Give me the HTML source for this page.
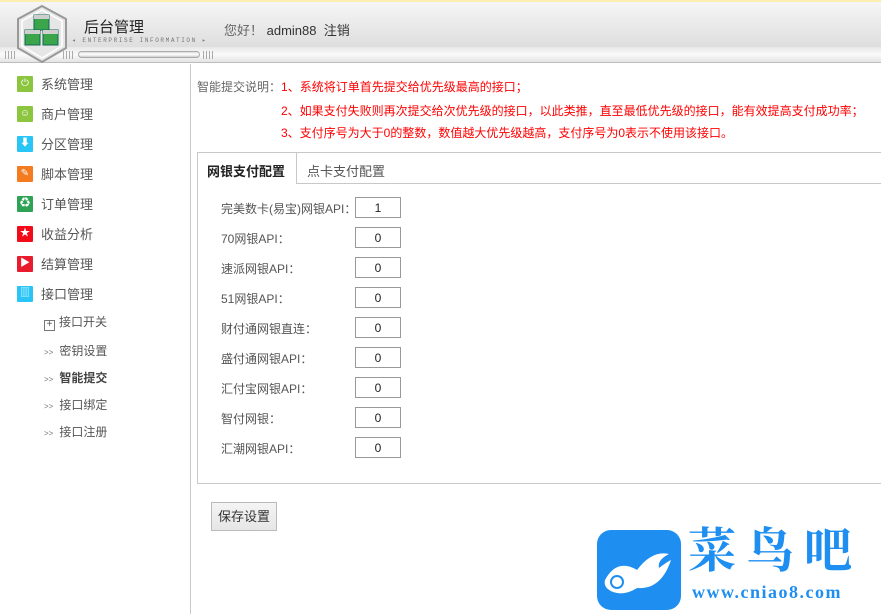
<!DOCTYPE html>
<html><head><meta charset="utf-8">
<style>
*{margin:0;padding:0;box-sizing:border-box}
body{width:881px;height:614px;overflow:hidden;background:#fff;font-family:"Liberation Sans","Noto Sans CJK SC",sans-serif;font-size:12px;color:#555;position:relative}
.hdr{position:absolute;left:0;top:0;width:881px;height:47px;background:linear-gradient(#f6f6f6,#dedede);border-top:2px solid #fbeeb0}
.bar{position:absolute;left:0;top:47px;width:881px;height:16px;background:linear-gradient(#e8e8e8,#fafafa 50%,#e4e4e4);border-bottom:1px solid #bdbdbd}
.ticks{position:absolute;top:51px;height:8px;background:repeating-linear-gradient(90deg,#aaa 0 1px,transparent 1px 3px)}
.pill{position:absolute;left:78px;top:51px;width:122px;height:7px;border:1px solid #aaa;border-radius:4px;background:linear-gradient(#ddd,#fff,#ccc)}
.title{position:absolute;left:84px;top:16px;font-size:15px;color:#222}
.sub{position:absolute;left:72px;top:37px;font-size:6px;letter-spacing:1.6px;color:#777;font-family:"Liberation Mono",monospace}
.hello{position:absolute;left:224px;top:20px;font-size:13px;color:#333}
.hello span{color:#666}
.side{position:absolute;left:0;top:64px;width:191px;height:550px;border-right:1px solid #c8c8c8}
.mi{position:absolute;left:17px;height:17px;font-size:13px;color:#555;display:flex;align-items:center}
.mi i{display:inline-block;width:16px;height:16px;margin-right:8px;border-radius:1px;color:#fff;font-style:normal;font-size:10px;line-height:16px;text-align:center}
.si{position:absolute;left:44px;font-size:12px;color:#555}
.si b{font-size:8px;color:#777;font-weight:normal;margin-right:6px}
.note{position:absolute;left:197px;font-size:12px;color:#ff0000}
.panel{position:absolute;left:197px;top:152px;width:684px;height:332px;border:1px solid #c8c8c8;border-right:none}
.tabline{position:absolute;left:296px;top:183px;width:585px;height:1px;background:#c8c8c8}
.tab1{position:absolute;left:207px;top:161px;font-size:13px;font-weight:bold;color:#222}
.tab2{position:absolute;left:307px;top:161px;font-size:13px;color:#555}
.tabsep{position:absolute;left:296px;top:152px;width:1px;height:32px;background:#c8c8c8}
.row{position:absolute;left:221px;font-size:12px;color:#555}
.inp{position:absolute;left:355px;width:46px;height:21px;border:1px solid #999;font-size:12px;color:#222;text-align:center;line-height:21px}
.btn{position:absolute;left:211px;top:502px;width:66px;height:29px;border:1px solid #bbb;background:linear-gradient(#f4f4f4,#e6e6e6);font-size:13px;color:#333;text-align:center;line-height:27px}
</style></head><body>
<div class="hdr"></div>
<div class="bar"></div>
<div class="ticks" style="left:5px;width:12px"></div>
<div class="ticks" style="left:63px;width:12px"></div>
<div class="pill"></div>
<div class="ticks" style="left:203px;width:12px"></div>
<svg style="position:absolute;left:15px;top:4px" width="54" height="60" viewBox="0 0 54 60">
<polygon points="27,2 51,15 51,44 27,58 3,44 3,15" fill="#e6e6e6" stroke="#999" stroke-width="2"/>
<polygon points="27,6 47,17 47,42 27,54 7,42 7,17" fill="none" stroke="#fff" stroke-width="1.5"/>
<rect x="19" y="11" width="15" height="15" fill="#3aa54a" stroke="#165"/>
<rect x="10" y="26" width="15" height="15" fill="#3aa54a" stroke="#165"/>
<rect x="28" y="26" width="15" height="15" fill="#3aa54a" stroke="#165"/>
<rect x="19" y="11" width="15" height="4" fill="#cfcfcf"/>
<rect x="10" y="26" width="15" height="4" fill="#cfcfcf"/>
<rect x="28" y="26" width="15" height="4" fill="#cfcfcf"/>
</svg>
<div class="title">后台管理</div>
<div class="sub">◂ ENTERPRISE INFORMATION ▸</div>
<div class="hello"><span>您好！</span> admin88 &nbsp;注销</div>

<div class="side"></div>
<div class="mi" style="top:75px"><i style="background:#8cc63f">⏻</i>系统管理</div>
<div class="mi" style="top:105px"><i style="background:#8cc63f">☺</i>商户管理</div>
<div class="mi" style="top:135px"><i style="background:#29c5f6">⬇</i>分区管理</div>
<div class="mi" style="top:165px"><i style="background:#f47b20">✎</i>脚本管理</div>
<div class="mi" style="top:195px"><i style="background:#2ea356">♻</i>订单管理</div>
<div class="mi" style="top:225px"><i style="background:#f20c1a">★</i>收益分析</div>
<div class="mi" style="top:255px"><i style="background:#e81c2c">▶</i>结算管理</div>
<div class="mi" style="top:285px"><i style="background:#29c5f6">▥</i>接口管理</div>
<div class="si" style="top:313px;left:44px"><span style="display:inline-block;width:11px;height:11px;border:1px solid #777;font-size:10px;line-height:8px;text-align:center;margin-right:4px;vertical-align:-1px">+</span>接口开关</div>
<div class="si" style="top:342px"><b>&gt;&gt;</b>密钥设置</div>
<div class="si" style="top:369px;font-weight:bold;color:#444"><b>&gt;&gt;</b>智能提交</div>
<div class="si" style="top:396px"><b>&gt;&gt;</b>接口绑定</div>
<div class="si" style="top:423px"><b>&gt;&gt;</b>接口注册</div>

<div class="note" style="top:78px"><span style="color:#666">智能提交说明：</span>1、系统将订单首先提交给优先级最高的接口；</div>
<div class="note" style="top:102px;left:281px">2、如果支付失败则再次提交给次优先级的接口，以此类推，直至最低优先级的接口，能有效提高支付成功率；</div>
<div class="note" style="top:124px;left:281px">3、支付序号为大于0的整数，数值越大优先级越高，支付序号为0表示不使用该接口。</div>

<div class="panel"></div>
<div class="tabsep"></div>
<div class="tabline"></div>
<div class="tab1">网银支付配置</div>
<div class="tab2">点卡支付配置</div>

<div class="row" style="top:200px">完美数卡(易宝)网银API：</div><div class="inp" style="top:197px">1</div>
<div class="row" style="top:230px">70网银API：</div><div class="inp" style="top:227px">0</div>
<div class="row" style="top:260px">速派网银API：</div><div class="inp" style="top:257px">0</div>
<div class="row" style="top:290px">51网银API：</div><div class="inp" style="top:287px">0</div>
<div class="row" style="top:320px">财付通网银直连：</div><div class="inp" style="top:317px">0</div>
<div class="row" style="top:350px">盛付通网银API：</div><div class="inp" style="top:347px">0</div>
<div class="row" style="top:380px">汇付宝网银API：</div><div class="inp" style="top:377px">0</div>
<div class="row" style="top:410px">智付网银：</div><div class="inp" style="top:407px">0</div>
<div class="row" style="top:440px">汇潮网银API：</div><div class="inp" style="top:437px">0</div>

<div class="btn">保存设置</div>

<svg style="position:absolute;left:597px;top:530px" width="84" height="84" viewBox="0 0 84 84">
<rect x="0" y="0" width="84" height="80" rx="14" fill="#1e8ff0"/>
<path d="M8 50 Q20 28 40 40 Q55 20 72 24 Q60 30 62 38 Q70 32 74 30 Q64 60 40 58 Q28 66 16 62 Q6 58 8 50Z" fill="#fff"/>
<circle cx="20" cy="52" r="7" fill="#1e8ff0"/><circle cx="20" cy="52" r="5" fill="#fff"/>
</svg>
<div style="position:absolute;left:688px;top:524px;font-size:48px;color:#1e8ff0;font-family:'Liberation Serif','Noto Serif CJK SC',serif;font-weight:bold;letter-spacing:10px;line-height:56px">菜鸟吧</div>
<div style="position:absolute;left:692px;top:582px;font-size:18px;color:#1e8ff0;font-family:'Liberation Serif',serif;font-weight:bold;letter-spacing:1.5px">www.cniao8.com</div>
</body></html>
